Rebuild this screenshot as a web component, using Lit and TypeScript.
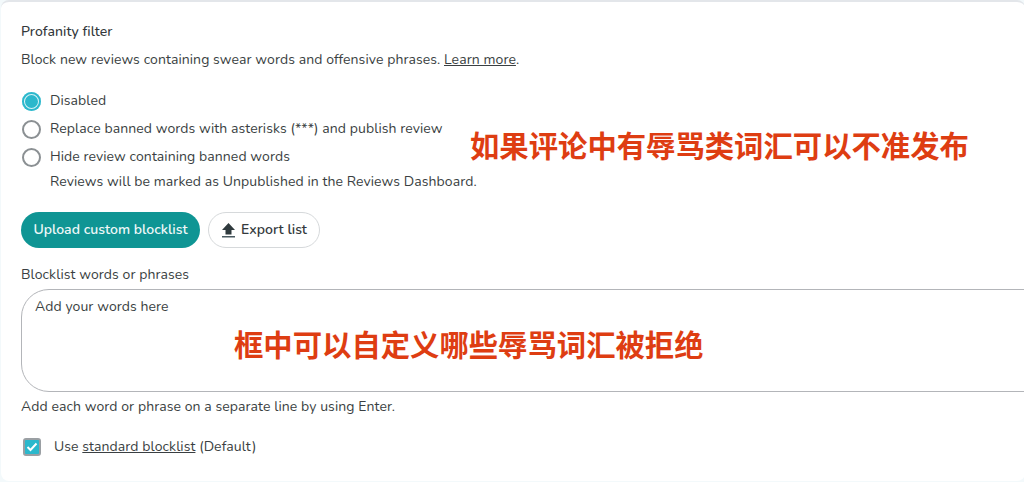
import { LitElement, html, css } from "lit";
import { customElement } from "lit/decorators.js";

@customElement("app-root")
export class AppRoot extends LitElement {
  static styles = css`
    :host { display: block; width: 1024px; height: 482px; overflow: hidden; position: relative; background: #f3f9fb;
      font-family: "Nunito", "Lato", "Noto Sans", sans-serif; color: #3a3f42; font-size: 14px; letter-spacing: 0.08px; }
    .card { box-sizing: border-box; width: 1024px; height: 481px; margin-left: 1px; background: #fff; border-top: 2px solid #e3e6ea; border-radius: 8px; padding: 21px 0 0 20px; display: flex; flex-direction: column; }
    .title { font-size: 14px; line-height: 18px; font-weight: 500; letter-spacing: 0.05px; color: #33383b; }
    .desc { margin-top: 10px; line-height: 18px; }
    a { color: inherit; text-decoration: underline; }
    .radios { margin-top: 23px; display: flex; flex-direction: column; gap: 10px; }
    .radio { display: flex; align-items: center; gap: 9px; height: 18px; line-height: 18px; }
    .dot { box-sizing: border-box; width: 19px; height: 19px; margin-left: 1px; border-radius: 50%; border: 2px solid #8b9093; background: #fff; flex: none; }
    .dot.on { border: none; background: #2bb8cc; box-shadow: inset 0 0 0 2px #2bb8cc, inset 0 0 0 3px #d8f3f7; }
    .note { margin: 7px 0 0 29px; line-height: 18px; }
    .buttons { margin-top: 21px; display: flex; gap: 8px; }
    .btn { box-sizing: border-box; height: 36px; padding-bottom: 1px; border-radius: 18px; display: flex; align-items: center; font-size: 14px; font-weight: 600; letter-spacing: 0.02px; }
    .primary { width: 179px; justify-content: center; background: #0f9594; color: #eef8f8; }
    .secondary { width: 112px; justify-content: center; gap: 5px; background: #fff; border: 1px solid #d6d9db; color: #343a3d; }
    .label { margin-top: 18px; line-height: 18px; }
    .area { box-sizing: border-box; margin-top: 5px; width: 1040px; height: 103px; border: 1px solid #b3b5b9; border-radius: 28px; padding: 8px 13px; line-height: 18px; }
    .help { margin-top: 6px; line-height: 18px; }
    .check { margin-top: 22px; display: flex; align-items: center; gap: 13px; line-height: 18px; }
    .box { box-sizing: border-box; width: 18px; height: 18px; margin-left: 2px; border-radius: 3px; background: #2bb8cc; border: 2px solid #9a9fa3; display: flex; align-items: center; justify-content: center; flex: none; }
    .ann { position: absolute; color: #de3d12; font-family: "Noto Sans CJK SC", sans-serif; font-weight: 700; font-size: 29.35px; line-height: 36px; letter-spacing: 0; white-space: nowrap; }
    .a1 { left: 470px; top: 126px; }
    .a2 { left: 234px; top: 325px; }
  `;

  render() {
    return html`
      <div class="card">
        <div class="title">Profanity filter</div>
        <div class="desc">Block new reviews containing swear words and offensive phrases. <a>Learn more</a>.</div>
        <div class="radios">
          <div class="radio"><span class="dot on"></span>Disabled</div>
          <div class="radio"><span class="dot"></span>Replace banned words with asterisks (***) and publish review</div>
          <div class="radio"><span class="dot"></span>Hide review containing banned words</div>
        </div>
        <div class="note">Reviews will be marked as Unpublished in the Reviews Dashboard.</div>
        <div class="buttons">
          <div class="btn primary">Upload custom blocklist</div>
          <div class="btn secondary">
            <svg width="15" height="16" viewBox="0 0 15 16"><path d="M7.5 1 14 8H10.5V12.5H4.5V8H1Z" fill="#2f3a3d"/><rect x="1" y="14" width="13" height="1.5" fill="#4a5a60"/></svg>
            Export list
          </div>
        </div>
        <div class="label">Blocklist words or phrases</div>
        <div class="area">Add your words here</div>
        <div class="help">Add each word or phrase on a separate line by using Enter.</div>
        <div class="check">
          <span class="box"><svg width="12" height="10" viewBox="0 0 12 10"><path d="M1.5 5 4.5 8 10.5 1.5" fill="none" stroke="#fff" stroke-width="2"/></svg></span>
          <span>Use <a>standard blocklist</a> (Default)</span>
        </div>
      </div>
      <div class="ann a1">如果评论中有辱骂类词汇可以不准发布</div>
      <div class="ann a2">框中可以自定义哪些辱骂词汇被拒绝</div>
    `;
  }
}
